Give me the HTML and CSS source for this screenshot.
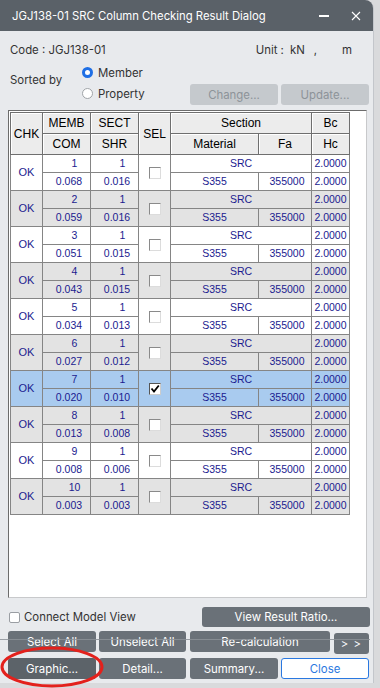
FILE: index.html
```html
<!DOCTYPE html>
<html>
<head>
<meta charset="utf-8">
<link rel="stylesheet" href="styles.css">
</head>
<body>
<div class="window">
  <div class="titlebar">
    <span class="title">JGJ138-01 SRC Column Checking Result Dialog</span>
    <div class="tb-controls">
      <div class="tb-min"></div>
      <svg class="tb-close" width="10" height="10" viewBox="0 0 10 10"><path d="M1 1 L9 9 M9 1 L1 9" stroke="#fff" stroke-width="1.1" fill="none"/></svg>
    </div>
  </div>
  <div class="info">
    <div class="code-row">
      <span class="code">Code : JGJ138-01</span>
      <span class="unit">Unit :</span><span class="unit-kn">kN</span><span class="unit-comma">,</span><span class="unit-m">m</span>
    </div>
    <div class="sort">
      <div class="sort-label">Sorted by</div>
      <div class="radios">
        <div class="radio-line"><span class="radio on"></span><span>Member</span></div>
        <div class="radio-line"><span class="radio"></span><span>Property</span></div>
      </div>
      <div class="sort-btns">
        <div class="btn disabled">Change...</div>
        <div class="btn disabled">Update...</div>
      </div>
    </div>
  </div>
  <div class="frame">
    <table class="grid">
      <colgroup>
        <col class="c-chk"><col class="c-memb"><col class="c-sect"><col class="c-sel"><col class="c-mat"><col class="c-fa"><col class="c-bc">
      </colgroup>
      <thead>
        <tr><th rowspan="2">CHK</th><th>MEMB</th><th>SECT</th><th rowspan="2">SEL</th><th colspan="2">Section</th><th>Bc</th></tr>
        <tr><th>COM</th><th>SHR</th><th>Material</th><th>Fa</th><th>Hc</th></tr>
      </thead>
      <tbody class="odd">
        <tr><td rowspan="2" class="chk">OK</td><td class="n1">1</td><td class="n1">1</td><td rowspan="2" class="sel"><span class="cb"></span></td><td colspan="2">SRC</td><td>2.0000</td></tr>
        <tr><td class="n2">0.068</td><td class="n2">0.016</td><td>S355</td><td class="fa">355000</td><td>2.0000</td></tr>
      </tbody>
      <tbody class="even">
        <tr><td rowspan="2" class="chk">OK</td><td class="n1">2</td><td class="n1">1</td><td rowspan="2" class="sel"><span class="cb"></span></td><td colspan="2">SRC</td><td>2.0000</td></tr>
        <tr><td class="n2">0.059</td><td class="n2">0.016</td><td>S355</td><td class="fa">355000</td><td>2.0000</td></tr>
      </tbody>
      <tbody class="odd">
        <tr><td rowspan="2" class="chk">OK</td><td class="n1">3</td><td class="n1">1</td><td rowspan="2" class="sel"><span class="cb"></span></td><td colspan="2">SRC</td><td>2.0000</td></tr>
        <tr><td class="n2">0.051</td><td class="n2">0.015</td><td>S355</td><td class="fa">355000</td><td>2.0000</td></tr>
      </tbody>
      <tbody class="even">
        <tr><td rowspan="2" class="chk">OK</td><td class="n1">4</td><td class="n1">1</td><td rowspan="2" class="sel"><span class="cb"></span></td><td colspan="2">SRC</td><td>2.0000</td></tr>
        <tr><td class="n2">0.043</td><td class="n2">0.015</td><td>S355</td><td class="fa">355000</td><td>2.0000</td></tr>
      </tbody>
      <tbody class="odd">
        <tr><td rowspan="2" class="chk">OK</td><td class="n1">5</td><td class="n1">1</td><td rowspan="2" class="sel"><span class="cb"></span></td><td colspan="2">SRC</td><td>2.0000</td></tr>
        <tr><td class="n2">0.034</td><td class="n2">0.013</td><td>S355</td><td class="fa">355000</td><td>2.0000</td></tr>
      </tbody>
      <tbody class="even">
        <tr><td rowspan="2" class="chk">OK</td><td class="n1">6</td><td class="n1">1</td><td rowspan="2" class="sel"><span class="cb"></span></td><td colspan="2">SRC</td><td>2.0000</td></tr>
        <tr><td class="n2">0.027</td><td class="n2">0.012</td><td>S355</td><td class="fa">355000</td><td>2.0000</td></tr>
      </tbody>
      <tbody class="selected">
        <tr><td rowspan="2" class="chk">OK</td><td class="n1">7</td><td class="n1">1</td><td rowspan="2" class="sel"><span class="cb checked"><svg width="10" height="10" viewBox="0 0 10 10"><path d="M1.5 4.5 L4 7.5 L8.8 1.5" stroke="#000" stroke-width="1.8" fill="none"/></svg></span></td><td colspan="2">SRC</td><td>2.0000</td></tr>
        <tr><td class="n2">0.020</td><td class="n2">0.010</td><td>S355</td><td class="fa">355000</td><td>2.0000</td></tr>
      </tbody>
      <tbody class="even">
        <tr><td rowspan="2" class="chk">OK</td><td class="n1">8</td><td class="n1">1</td><td rowspan="2" class="sel"><span class="cb"></span></td><td colspan="2">SRC</td><td>2.0000</td></tr>
        <tr><td class="n2">0.013</td><td class="n2">0.008</td><td>S355</td><td class="fa">355000</td><td>2.0000</td></tr>
      </tbody>
      <tbody class="odd">
        <tr><td rowspan="2" class="chk">OK</td><td class="n1">9</td><td class="n1">1</td><td rowspan="2" class="sel"><span class="cb"></span></td><td colspan="2">SRC</td><td>2.0000</td></tr>
        <tr><td class="n2">0.008</td><td class="n2">0.006</td><td>S355</td><td class="fa">355000</td><td>2.0000</td></tr>
      </tbody>
      <tbody class="even">
        <tr><td rowspan="2" class="chk">OK</td><td class="n1">10</td><td class="n1">1</td><td rowspan="2" class="sel"><span class="cb"></span></td><td colspan="2">SRC</td><td>2.0000</td></tr>
        <tr><td class="n2">0.003</td><td class="n2">0.003</td><td>S355</td><td class="fa">355000</td><td>2.0000</td></tr>
      </tbody>
    </table>
  </div>
  <div class="controls">
    <div class="row row-a">
      <label class="connect"><span class="box"></span>Connect Model View</label>
      <div class="btn b-ratio">View Result Ratio...</div>
    </div>
    <div class="row row-b">
      <div class="btn b-w88">Select All</div>
      <div class="btn b-w87">Unselect All</div>
      <div class="btn b-recalc">Re-calculation</div>
      <div class="btn b-more">&gt; &gt;</div>
    </div>
    <div class="row row-c">
      <div class="btn b-w88 b-graphic">Graphic...</div>
      <div class="btn b-w87">Detail...</div>
      <div class="btn b-w88">Summary...</div>
      <div class="btn b-close">Close</div>
    </div>
  </div>
</div>
<div class="artifact-line"></div>
<svg class="annot" width="110" height="48" viewBox="0 0 110 48"><ellipse cx="52" cy="27" rx="50" ry="19" fill="none" stroke="#e3211c" stroke-width="3"/></svg>
</body>
</html>
```
FILE: styles.css
```css
html, body { margin: 0; padding: 0; }
body {
  width: 380px; height: 688px; overflow: hidden; position: relative;
  background: #d9dadc;
  font-family: "Inter", "Noto Sans", sans-serif;
}
.window {
  width: 374px; height: 683px; box-sizing: border-box;
  background: #e8eaed;
  border-top-right-radius: 9px;
  border-right: 1px solid #c3c6cb;
  display: flex; flex-direction: column;
}
.titlebar {
  height: 31px; flex: none;
  background: #5a6168; color: #fff;
  border-top-right-radius: 8px;
  display: flex; align-items: center;
  padding-left: 12px;
  font-size: 11.3px;
}
.title { flex: 1 1 auto; min-width: 0; }
.tb-controls {
  flex: none; width: 48px; height: 31px;
  display: flex; align-items: center; gap: 22px;
  padding-right: 6px;
}
.tb-min {
  flex: none;
  width: 10px; height: 1.5px; margin-top: 1px;
  background: #ffffff;
}
.tb-close { flex: none; display: block; }

.info { padding: 8px 0 0 10px; }
.code-row {
  display: flex; align-items: center; height: 22px;
  font-size: 11.4px; color: #333;
}
.code { flex: 1; }
.unit { margin-right: 6px; }
.unit-kn { margin-right: 9px; }
.unit-comma { margin-right: 25px; }
.unit-m { margin-right: 21px; }

.sort { display: flex; height: 44px; font-size: 11.4px; color: #333; margin-top: 1px; }
.sort-label { width: 72px; padding-top: 10px; line-height: 16px; }
.radios { width: 108px; display: flex; flex-direction: column; }
.radio-line { height: 21px; display: flex; align-items: center; gap: 5px; }
.radio {
  width: 9px; height: 9px; border-radius: 50%;
  border: 1px solid #a0a4a8; background: #fff;
}
.radio.on { width: 5px; height: 5px; border: 3px solid #1f6fe5; }
.sort-btns { display: flex; gap: 3px; align-self: flex-end; margin-bottom: 1px; }

.btn {
  height: 21px; border-radius: 3px;
  background: #6a7178; color: #fff;
  font-size: 11.4px;
  display: flex; align-items: center; justify-content: center;
  box-sizing: border-box; white-space: nowrap;
}
.btn.disabled { width: 88px; background: #c5c9cd; color: #8d9399; }

.frame {
  margin: 4px 0 0 8px;
  width: 359px; height: 488px; box-sizing: border-box;
  background: #fff;
  border: 1px solid #6c6c6c;
  border-right-color: #c8c9cb; border-bottom-color: #c8c9cb;
  padding: 1px 0 0 1px;
}
.grid {
  border-collapse: collapse; table-layout: fixed;
  width: 339px;
  font-family: "Liberation Sans", Arial, sans-serif;
}
.c-chk { width: 32px; } .c-memb { width: 48px; } .c-sect { width: 48px; }
.c-sel { width: 32px; } .c-mat { width: 88px; } .c-fa { width: 53px; } .c-bc { width: 38px; }
.grid th {
  height: 20px; padding: 0;
  background: #ececec; color: #000;
  font-weight: normal; font-size: 12px;
  border: 1px solid #6f6f6f;
  box-shadow: inset 1px 1px 0 #fff;
}
.grid td {
  height: 17px; padding: 0; line-height: 17px;
  border: 1px solid #858585;
  font-size: 10.5px; color: #1b1b8f;
  text-align: center; white-space: nowrap;
}
.grid td.chk { font-size: 11px; }
.grid td.n1 { padding-left: 16px; }
.grid td.n2 { padding-left: 5px; }
.grid td.fa { padding-left: 4px; }
.odd td { background: #fff; }
.even td { background: #e3e3e3; }
.selected td { background: #a9cbef; }
.cb {
  display: inline-block; vertical-align: middle;
  width: 12px; height: 12px; box-sizing: border-box;
  background: #fff;
  border: 1px solid #8a8a8a; border-right-color: #dcdcdc; border-bottom-color: #dcdcdc;
  position: relative;
}
.cb.checked { border-color: #555; border-right-color: #ccc; border-bottom-color: #ccc; }
.cb svg { display: block; margin: 0; }

.controls { display: flex; flex-direction: column; gap: 4px; margin-top: 9px; padding-left: 8px; }
.row { display: flex; }
.row-a { height: 20px; align-items: center; }
.connect {
  display: flex; align-items: center; gap: 4px;
  font-size: 11.4px; color: #333; width: 193px; margin-left: 1px;
}
.box {
  width: 11px; height: 11px; box-sizing: border-box;
  border: 1px solid #9a9ea3; border-radius: 2px; background: #fff;
}
.b-ratio { width: 168px; height: 20px; }
.row-b { gap: 3px; }
.b-w88 { width: 88px; }
.b-w87 { width: 87px; margin-right: 1px; }
.b-recalc { width: 140px; margin-right: 1px; }
.b-more { width: 35px; margin-top: 2px; letter-spacing: 1px; }
.row-c { gap: 3px; }
.b-close {
  width: 88px; background: #fff; color: #2a78e0;
  border: 1px solid #2a78e0;
}
.b-graphic { background: #5c6369; }

.artifact-line {
  position: absolute; left: 0; top: 639px;
  width: 370px; height: 1px; background: rgba(140, 146, 152, 0.85);
}
.annot { position: absolute; left: 0; top: 640px; }
```
